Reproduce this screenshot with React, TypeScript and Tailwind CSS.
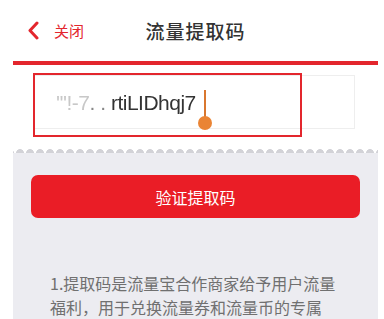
import React from 'react';

const CJK = { fontFamily: '"Noto Sans CJK SC", "Noto Sans", sans-serif' };

const BackIcon: React.FC = () => (
  <svg width="12" height="19" viewBox="0 0 12 19" fill="none">
    <path d="M10 2L3 9.5L10 17" stroke="#e3262d" strokeWidth="3" strokeLinecap="round" strokeLinejoin="round" />
  </svg>
);

const App: React.FC = () => {
  return (
    <div className="w-[384px] h-[319px] overflow-hidden bg-white" style={CJK}>
      <div className="ml-[13px] w-[365px]">
        {/* header */}
        <div className="grid grid-cols-[1fr_auto_1fr] items-center h-[61px]">
          <div className="flex items-center gap-[15px] pl-[14px]">
            <BackIcon />
            <span className="text-[15px] text-[#e3262d] leading-none">关闭</span>
          </div>
          <h1 className="text-[19px] text-[#333] font-medium leading-none tracking-[1px]">流量提取码</h1>
          <div />
        </div>
        <div className="h-[4px] bg-[#e3262d]" />

        {/* code input */}
        <div className="pl-[20px] pr-[23px] pt-[10px] pb-[19px]">
          <div className="relative h-[54px] border border-[#eeeeee] bg-white flex items-center pl-[22px]">
            <span className="text-[21px] leading-none text-[#333] blur-[0.5px] tracking-[-0.5px]" style={{ fontFamily: '"Liberation Sans", sans-serif' }}>
              <span className="text-[#c8c8c8]">'''!-7</span>
              <span className="text-[#888]">. . </span>
              rtiLIDhqj7
            </span>
            <div className="absolute left-[170px] top-[14px] w-[2px] h-[34px] bg-[#d9772f]" />
            <div className="absolute left-[164px] top-[40px] w-[14px] h-[14px] rounded-full bg-[#ea8434]" />
            <div className="absolute -left-px top-[-3px] w-[269px] h-[64px] border-2 border-[#e3262d]" />
          </div>
        </div>

        {/* scalloped edge */}
        <div className="h-[5px] bg-[radial-gradient(circle_at_50%_100%,#d2d2d7_3.6px,transparent_4.2px)] bg-[length:10px_5px] bg-[position:2px_0]" />

        {/* panel */}
        <div className="bg-[#ececf1] h-[200px] pt-[22px]">
          <div className="mx-[18px] h-[43px] rounded-[7px] bg-[#ea1d26] flex items-center justify-center">
            <span className="text-white text-[16px] leading-none">验证提取码</span>
          </div>
          <p className="mt-[53px] ml-[37px] w-[300px] text-[16px] leading-[24px] text-[#707070]">
            1.提取码是流量宝合作商家给予用户流量福利，用于兑换流量券和流量币的专属码；
          </p>
        </div>
      </div>
    </div>
  );
};

export default App;
